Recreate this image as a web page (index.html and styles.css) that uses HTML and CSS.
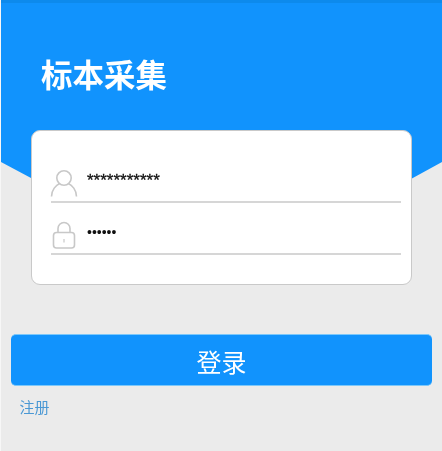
FILE: index.html
```html
<!DOCTYPE html>
<html lang="zh">
<head>
<meta charset="utf-8">
<title>标本采集</title>
<link rel="stylesheet" href="styles.css">
</head>
<body>
<div class="page">
  <header class="hero">
    <h1 class="title">标本采集</h1>
  </header>
  <form class="card">
    <div class="field">
      <svg class="icon" viewBox="0 0 28 30" width="28" height="30" aria-hidden="true">
        <circle cx="14" cy="9" r="7.2" fill="none" stroke="#c8c8c8" stroke-width="1.6"/>
        <path d="M1.5 27.500c0-6.500 4.500-11.500 8.200-13M26.500 27.500c0-6.500-4.500-11.500-8.200-13" fill="none" stroke="#c8c8c8" stroke-width="1.600"/>
      </svg>
      <span class="value stars">***********</span>
    </div>
    <div class="field">
      <svg class="icon" viewBox="0 0 28 30" width="28" height="30" aria-hidden="true">
        <rect x="3.500" y="11.500" width="21" height="15.500" rx="3" fill="none" stroke="#c8c8c8" stroke-width="1.600"/>
        <path d="M8 11.500V7.500a6 6 0 0 1 12 0V11.500" fill="none" stroke="#c8c8c8" stroke-width="1.600"/>
        <path d="M14 18v3.500" fill="none" stroke="#c8c8c8" stroke-width="1.200"/>
      </svg>
      <span class="value dots">••••••</span>
    </div>
  </form>
  <button class="login" type="button">登录</button>
  <a class="register" href="#">注册</a>
</div>
</body>
</html>
```
FILE: styles.css
```css
html, body {
  margin: 0;
  padding: 0;
}
body {
  width: 442px;
  height: 451px;
  overflow: hidden;
  background: #f7f7f7;
  font-family: "Liberation Sans", "Noto Sans CJK SC", sans-serif;
}
.page {
  display: flex;
  flex-direction: column;
  height: 451px;
  margin-left: 1px;
  background: #ebebeb;
  filter: blur(0.35px);
}
.hero {
  height: 215px;
  flex: none;
  box-sizing: border-box;
  padding: 54px 0 0 40px;
  background: #1193fd;
  border-top: 3px solid #0d8aec;
  clip-path: polygon(0 0, 100% 0, 100% 162px, 410px 179px, 410px 215px, 30px 215px, 30px 178px, 0 162px);
}
.title {
  margin: 0;
  font-size: 31.5px;
  line-height: 38px;
  font-weight: 700;
  color: #fff;
}
.card {
  flex: none;
  box-sizing: border-box;
  width: 381px;
  height: 155px;
  margin: -85px 0 0 30px;
  padding: 22px 10px 0 19px;
  background: #fff;
  border: 1px solid #c9c9c9;
  border-radius: 9px;
  position: relative;
}
.field {
  display: flex;
  align-items: flex-start;
  gap: 9px;
  height: 50px;
  margin-bottom: 2px;
  border-bottom: 2px solid #d6d6d6;
  box-sizing: border-box;
}
.icon {
  flex: none;
  margin-top: 16px;
  margin-left: -1px;
}
.value {
  color: #111;
}
.stars {
  margin-top: 18px;
  font-size: 17px;
  line-height: 20px;
  -webkit-text-stroke: 0.3px #111;
}
.dots {
  margin-top: 17px;
  font-size: 14px;
  line-height: 20px;
}
.login {
  flex: none;
  width: 421px;
  height: 52px;
  margin: 49px 0 0 10px;
  padding: 2px 0 0;
  background: #1193fd;
  color: #fff;
  border: 0;
  border-top: 1px solid #7cc8fa;
  border-bottom: 1px solid #7cc8fa;
  border-radius: 5px;
  font-family: inherit;
  font-size: 25px;
}
.register {
  margin: 13px 0 0 18.500px;
  font-size: 15px;
  line-height: 18px;
  color: #4a98d4;
  text-decoration: none;
}
```
